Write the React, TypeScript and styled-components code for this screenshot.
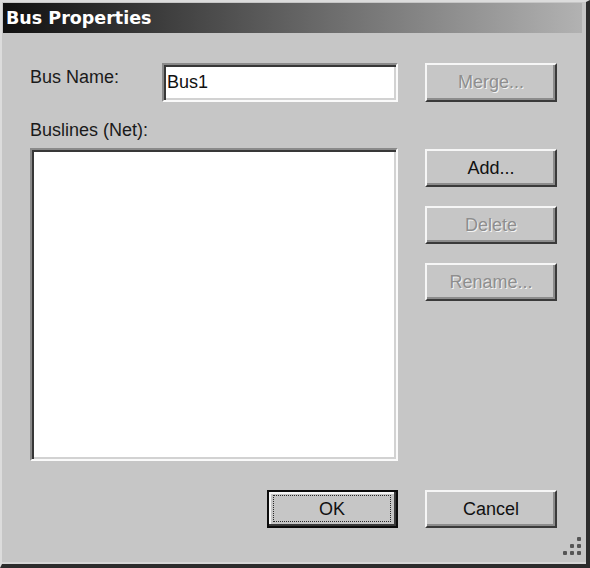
import styled, { createGlobalStyle } from "styled-components";

const GlobalStyle = createGlobalStyle`
	html, body {
		margin: 0;
		padding: 0;
		background: #c6c6c6;
	}
	* {
		box-sizing: border-box;
	}
`;

const Window = styled.div`
	position: relative;
	width: 590px;
	height: 568px;
	background: #c6c6c6;
	border-style: solid;
	border-width: 2px 4px 4px 2px;
	border-color: #dcdcdc #2c2c2c #2c2c2c #dcdcdc;
	padding: 1px 4px 2px 1px;
	box-shadow: inset 0 -2px 0 #d6d6d6;
	display: flex;
	flex-direction: column;
	font-family: "Liberation Sans", Arial, sans-serif;
	font-size: 18px;
	color: #1a1a1a;
`;

const TitleBar = styled.div`
	height: 30px;
	display: flex;
	align-items: center;
	padding-left: 3px;
	background: linear-gradient(to right, #101010 0%, #5a5a5a 45%, #b2b2b2 100%);
	color: #ffffff;
	font-family: "DejaVu Sans", Verdana, sans-serif;
	font-weight: bold;
	font-size: 17.5px;
`;

const Body = styled.div`
	display: grid;
	grid-template-columns: 368px 132px;
	column-gap: 27px;
	align-items: start;
	padding: 30px 0 0 27px;
`;

const NameRow = styled.div`
	display: flex;
	align-items: flex-start;
`;

const Label = styled.div<{ $width?: number; $top?: number }>`
	width: ${(p) => (p.$width ? `${p.$width}px` : "auto")};
	margin-top: ${(p) => p.$top ?? 0}px;
	line-height: 21px;
	white-space: nowrap;
`;

const sunken = `
	background: #ffffff;
	border-style: solid;
	border-width: 2px;
	border-color: #8a8a8a #fafafa #fafafa #8a8a8a;
	box-shadow: inset 2px 2px 0 #383838, inset -2px -2px 0 #d2d2d2;
`;

const TextInput = styled.div`
	${sunken}
	width: 236px;
	height: 39px;
	display: flex;
	align-items: center;
	padding-left: 3px;
	color: #111;
`;

const ListSection = styled.div`
	display: flex;
	flex-direction: column;
`;

const ListBox = styled.div`
	${sunken}
	margin-top: 7px;
	height: 313px;
`;

const ButtonStack = styled.div`
	margin-top: 47px;
	display: flex;
	flex-direction: column;
	gap: 19px;
`;

const Button = styled.div<{ $disabled?: boolean; $height?: number }>`
	width: 132px;
	height: ${(p) => p.$height ?? 38}px;
	display: flex;
	align-items: center;
	justify-content: center;
	border-style: solid;
	border-width: 2px;
	border-color: #f6f6f6 #3a3a3a #3a3a3a #f6f6f6;
	box-shadow: inset -2px -2px 0 #8c8c8c;
	background: #c6c6c6;
	color: ${(p) => (p.$disabled ? "#8e8e8e" : "#111")};
	text-shadow: ${(p) => (p.$disabled ? "1px 1px 0 #f4f4f4" : "none")};
`;

const Footer = styled.div`
	grid-column: 1 / 3;
	display: grid;
	grid-template-columns: 368px 132px;
	column-gap: 27px;
	margin-top: 29px;
`;

const DefaultButton = styled.div`
	justify-self: end;
	width: 131px;
	height: 38px;
	padding: 2px;
	border: 2px solid #0c0c0c;
	box-shadow: inset -2px -2px 0 #3a3a3a, inset 2px 2px 0 #f6f6f6;
	display: flex;
`;

const FocusRect = styled.div`
	flex: 1;
	margin: 1px 3px 2px 2px;
	padding-top: 2px;
	border: 1px dotted #2a2a2a;
	display: flex;
	align-items: center;
	justify-content: center;
	color: #111;
`;

const Grip = styled.svg`
	position: absolute;
	right: 3px;
	bottom: 4px;
`;

export default function App() {
	return (
		<>
			<GlobalStyle />
			<Window>
				<TitleBar>Bus Properties</TitleBar>
				<Body>
					<NameRow>
						<Label $width={132} $top={4}>
							Bus Name:
						</Label>
						<TextInput>Bus1</TextInput>
					</NameRow>
					<Button $disabled $height={39}>
						Merge...
					</Button>

					<ListSection>
						<Label $top={18}>Buslines (Net):</Label>
						<ListBox />
					</ListSection>
					<ButtonStack>
						<Button>Add...</Button>
						<Button $disabled>Delete</Button>
						<Button $disabled>Rename...</Button>
					</ButtonStack>

					<Footer>
						<DefaultButton>
							<FocusRect>OK</FocusRect>
						</DefaultButton>
						<Button>Cancel</Button>
					</Footer>
				</Body>
				<Grip width="26" height="26" viewBox="0 0 26 26">
					{[
						[20, 3],
						[13, 10],
						[20, 10],
						[6, 17],
						[13, 17],
						[20, 17],
					].map(([x, y]) => (
						<rect key={`${x}-${y}`} x={x} y={y} width="4" height="4" rx="1" fill="#555555" />
					))}
				</Grip>
			</Window>
		</>
	);
}
